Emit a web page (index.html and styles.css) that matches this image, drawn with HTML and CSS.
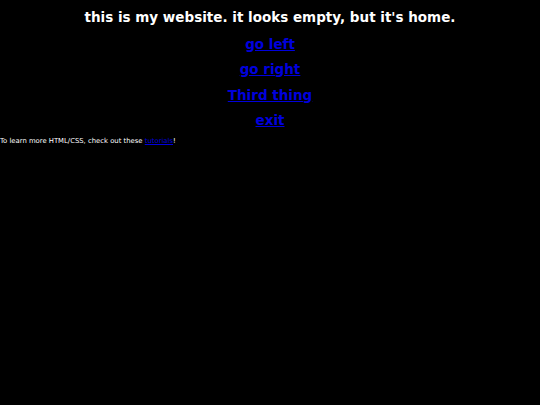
FILE: index.html
```html
<!DOCTYPE html>
<html>
<head>
<meta charset="utf-8">
<link rel="stylesheet" href="styles.css">
</head>
<body>
<h1 class="title">this is my website. it looks empty, but it's home.</h1>
<nav class="links">
<a href="#">go left</a>
<a href="#">go right</a>
<a href="#">Third thing</a>
<a href="#">exit</a>
</nav>
<p class="note">To learn more HTML/CSS, check out these <a href="#">tutorials</a>!</p>
</body>
</html>
```
FILE: styles.css
```css
html, body {
  margin: 0;
  padding: 0;
  background: #000;
  color: #fff;
  font-family: "DejaVu Sans", Verdana, sans-serif;
}
.title {
  margin: 0;
  padding-top: 9px;
  text-align: center;
  font-size: 13.5px;
  font-weight: bold;
  line-height: 16px;
}
.links {
  display: flex;
  flex-direction: column;
  align-items: center;
  gap: 9.5px;
  margin-top: 10.5px;
}
.links a {
  color: #0000dd;
  font-size: 13.5px;
  font-weight: bold;
  line-height: 16px;
}
.note {
  margin: 9px 0 0;
  font-size: 6.85px;
  line-height: 9px;
}
.note a {
  color: #0000dd;
}
```
